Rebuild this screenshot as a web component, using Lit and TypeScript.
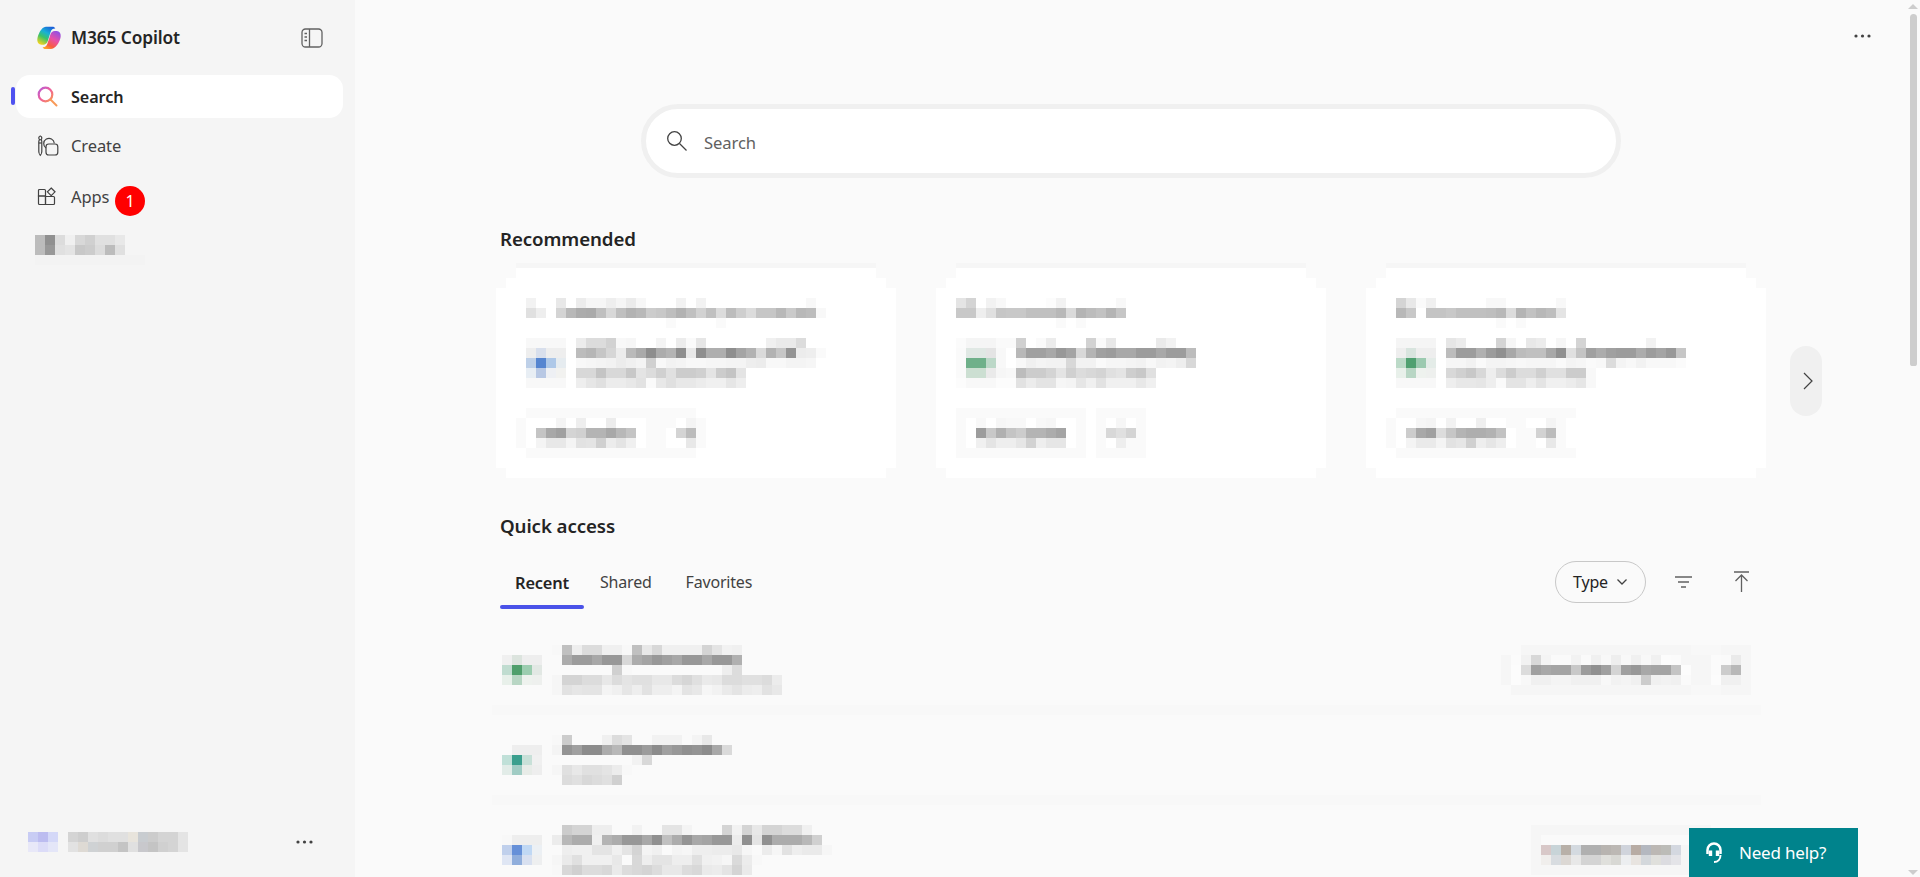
import { LitElement, html, css, svg } from "lit";
import { customElement } from "lit/decorators.js";

const CELL = 10;

function mosaic(rows: string[]) {
  const parsed = rows.map((r) => r.trim().split(/\s+/));
  const cols = Math.max(...parsed.map((r) => r.length));
  const rects = parsed.flatMap((row, y) =>
    row.map((t, x) => {
      if (t === ".") return null;
      const fill = t.length === 2 ? `#${t}${t}${t}` : `#${t}`;
      return svg`<rect x=${x * CELL} y=${y * CELL} width=${CELL} height=${CELL} fill=${fill}></rect>`;
    })
  );
  return html`<svg class="mosaic" width=${cols * CELL} height=${rows.length * CELL} shape-rendering="crispEdges">${rects}</svg>`;
}

interface CardData {
  title: string[];
  file: string[];
  chips: string[];
}

const cards: CardData[] = [
  {
    title: [
      ". f2 . . e8 . ec f6 f6 ee f5 eb f7 . . . f2 . f2 . . . . . . . . . . f8",
      ". e0 ee . d4 b8 ac aa bf d8 bf b2 b8 cc c8 be b2 c0 d2 c0 dc bc ce dc c6 c6 b8 ca b8 bc f8",
      ". . . . . . . . . . . . . . . fa . . . . fa",
    ],
    file: [
      ". f8 f8 f8 f8 . ec dc dc d2 f8 f6 . . f4 . ec fa e6 . . . . . . f0 ea ea dc",
      ". ee d8dfec ee ee . bc b6 c6 d6 ec ba aa 8e ac b4 8e e8 8e ae ae 8e a4 b2 da b2 c6 94 ec ee fa",
      ". bed0e8 5585d0 aec8e8 e6ecf0 . f8 f6 f4 f2 ec f0 f4 d0 f8 f2 f4 f8 f8 f6 f6 f4 f4 ee ec f8 f8 f4 f4 f6",
      ". e8eef4 b8c8e4 eef0f4 f2f2f0 . d8 d8 c4 d8 d8 c8 e4 dc d0 e0 cc cc d0 e4 cc c4 e4",
      ". f8 f8 f8 f8 . ee e6 e0 ec ec e8 e2 fa e8 e0 e8 e8 ec f0 f0 e6 ee",
    ],
    chips: [
      ". fa fa fa fa fa fa fa fa fa fa fa fa fa fa fa fa fa",
      "fa . . . f4 . ee . . ec . . . fa fa fa . f4 fa",
      "fa . c4 a8 a0 d4 d0 b4 b4 a8 b8 c4 . fa fa . d4 bc fa",
      "fa . f4 e8 e8 f4 e2 e4 d0 ec e4 f0 . fa fa . . e8 fa",
      ". fa fa fa fa fa fa fa fa fa fa fa fa fa fa fa fa fa",
    ],
  },
  {
    title: [
      "e4 d4 . f2 f8 . . . . fc f2 . . . . . f8",
      "c8 c8 ee e0 c6 c8 c8 c0 c0 c0 b8 da b4 bc c2 b4 c6",
      ". . . . . . . . . . fa . fa",
    ],
    file: [
      "fb f5 f5 f5 fa fa d0 . fa ec . . . d2 fa e8 . . . . ea f2",
      "fa e0e8e4 e0e8e4 e4 f8 . b8 a0 a0 a8 98 a4 d8 b4 a0 9c a8 a8 9c 9c a8 9c 9c bc",
      "fa 6fb08a 6fb08a bcd8c8 f8 . f8 f0 f4 f2 f2 d8 f2 f2 fa f6 f6 f4 f2 f8 f2 f4 ee d8",
      "fa ccdfd2 ccdfd2 ea f6 f8 bc cc cc d4 e4 d0 dc d8 d4 e0 e4 ce c8 e0",
      "fc f8 f8 f8 fc fc e2 ec e4 e4 f6 f4 e6 f0 e2 f0 f0 f0 e8 f0",
    ],
    chips: [
      "fa fa fa fa fa fa fa fa fa fa fa fa fa . fa fa fa fa fa",
      "fa . f8 . f6 f8 f8 . f8 f6 . . fa . fa . f6 . fa",
      "fa . 9c c8 b0 c4 cc b4 b4 ac a4 . fa . fa d8 e0 d4 fa",
      "fa . f0 e4 ee ee e6 d2 ee e6 e6 . fa . fa . ee fa fa",
      "fa fa fa fa fa fa fa fa fa fa fa fa fa . fa fa fa fa fa",
    ],
  },
  {
    title: [
      ". d4 e8 fa f0 . . . . . f8 f8 . . . . . f8",
      ". b8 c8 . c4 c4 c8 c0 c0 c0 be b8 dc b4 c2 b8 be e4",
      ". . . . . . . . . . . fa . fa",
    ],
    file: [
      ". f5 f5 f5 f5 . e6 ec . . . d4 f6 . e8 ec . f6 . d4 . . . . . . f2",
      ". ee d8e4de ee ee . bc 9c 9c b0 9c 90 a8 bc c0 c0 a8 90 e0 c4 a0 ac a0 9c 9c ac 9c a4 98 c6",
      ". bcdac8 4fa070 9ccab0 e4ece8 . f6 f6 f2 fa f4 f4 f6 f8 f6 f6 f6 fa f4 f6 fa f8 dc f4 f8 f2 f8 f8 f8 fb",
      ". e8f0ea b8d6c4 eef2ee eef0ee . d8 d0 c8 d8 ee dc cc dc dc d0 e0 e0 cc cc f8",
      ". f8 f8 f8 f8 . ee e8 e8 e6 ee fa e4 e4 ee e4 f0 f0 ec e6 f8",
    ],
    chips: [
      ". fa fa fa fa fa fa fa fa fa fa fa fa fa fa fa fa fa fa",
      "fa . . f6 f4 . f2 . . ef . . fa fa . . f4 fa",
      "fa . cc a8 a0 dc c6 b4 ae ae b2 c2 . fa fa d2 bc fa",
      "fa . f4 ea ea f4 e2 e6 d0 ee e6 ee . fa fa . e8 fa",
      ". fa fa fa fa fa fa fa fa fa fa fa fa fa fa fa fa fa fa",
    ],
  },
];

const recent: { left: string[]; right?: string[] }[] = [
  {
    left: [
      "fa fa fa fa . f8 c0 ee dc dc f0 f0 f8 c0 e8 d8 f0 f0 f0 f0 d4 e4 f2 f0",
      "f0 dce4de ee ee . fa ac 9c 9c a8 98 98 d8 ac a4 98 a0 a8 98 98 a8 98 98 b0",
      "c0dcd0 4f9f6c 9ccdb0 e2e8e4 . . . . . . . d0 f8 . . . . . . . . . ee dc",
      "e8f0ea b8d6c4 eef2ee eef0ee . f6 d4 d4 dc dc e8 dc e4 e0 e0 e8 e8 dc d6 e0 ea e8 dc dc e0 e0 dc ec",
      "fa fa fa fa . f6 e2 e6 e4 e4 f4 f0 e6 ee e2 ee ee f4 e4 e8 f6 f2 ea e4 ec ee e2 e8",
    ],
    right: [
      ". . f6 f6 f6 f6 f6 f6 f6 f6 f6 f6 f6 f6 f6 f6 f6 f6 f6 f8 f8 f8 f6 f6 f6",
      "f6 fb f2 d8 f4 fa fa f2 fa f0 f8 ee f8 f0 f8 f0 fc fb f6 f6 f6 fb fa ea f6",
      "f6 fc dc a0 a8 a4 a4 c8 9c 90 a0 d4 a0 98 a8 a4 a4 c4 fc f6 f6 fb cc b8 f6",
      "f6 fc f8 f0 f0 f4 f4 f0 f0 f0 f8 f2 f4 f0 cc f0 f2 f0 fa f6 f6 fc f0 f0 f6",
      ". f6 f6 f6 f6 f6 f6 f6 f6 f6 f6 f6 f6 f6 f6 f6 f6 f6 f6 f8 f8 f8 f6 f6 f6",
    ],
  },
  {
    left: [
      "fa fa fa fa . f8 cc . . . f0 dc e4 . fa f2 f2 f2 . f4 e8",
      "fa ee ee ee . f4 94 a0 8c 8c ac b8 90 90 9c 8c a0 98 90 94 8c a8 da",
      "c0e0d8 3a9f8e c8e0d8 f0 . . . . . . . . . f2 d8",
      "e2ece8 a0ccc4 e8ece8 ee . f6 e0 e8 e0 e0 e4 ec f8",
      "fa fa fa fa . fa dc e0 d8 dc e0 d0",
    ],
  },
  {
    left: [
      "fa fa fa fa . . cc d4 d4 ee ee . . f2 fa . e4 e4 f4 . . . d4 f2 d4 e8 d4 d4 dc dc f0",
      "f8 ee ee ee . ec b8 ac ac f0 b4 ac 98 98 a8 90 c0 ac 94 a8 a4 98 98 ec 90 e4 90 ac ac ac b8 d0",
      "c0d0ec 6690d8 c0d8f4 ecf0f4 . fa ee f0 f0 e4 e4 f0 e4 d4 f4 f0 fa f4 f6 ee ee ec ec e8 f6 fa ec f6 e2 ee ea ea f6",
      "dfe6f4 90aedc d8e0f0 eeeff0 . f6 ea e0 f0 f0 f0 e8 fa d8 ee e4 e4 ee ee e0 f0 f2 f6 da ec f8",
      "fa fa fa fa . f8 d8 d0 dc dc d8 ea dc d8 d4 dc e8 e8 dc d8 ea ec e4 d4 ea",
    ],
    right: [
      "f6 f6 f6 f6 f6 f6 f6 f6 f6 f6 f6 f6 f6 f6 f6 f6 f6 f6 . . . .",
      "f6 fa fa fa fa fa fa fa fa fa fa fa fa fa fa fa f6 f6 . . . .",
      "f6 d8c8c8 c8d4d8 b8b0a8 d4dae0 b0b0b0 b0b0b0 b8b4b0 bcb8b4 d0d4dc b8aca4 b4b8c0 bcb8b4 bcbcb8 d4d8e0 f6 f6 f6 . . . .",
      "f6 f0eeec d8dce0 dcd8d4 e8e8e8 d4d4d4 d4d4d4 e0e0dc d8d8d4 eceef0 e8e4e0 d4d8dc e0e0dc dcdce0 e4e4e8 f6 f6 f6 . . . .",
      "f6 f6 f6 f6 f6 f6 f6 f6 f6 f6 f6 f6 f6 f6 f6 f6 f6 f6 . . . .",
    ],
  },
];

const dots = html`<svg width="17" height="4" viewBox="0 0 17 4" fill="#424242"><circle cx="2" cy="2" r="1.6"></circle><circle cx="8.5" cy="2" r="1.6"></circle><circle cx="15" cy="2" r="1.6"></circle></svg>`;

const logo = html`<svg width="24" height="24" viewBox="0 0 24 24">
  <defs>
    <linearGradient id="lgA" x1="0.75" y1="0" x2="0.2" y2="1">
      <stop offset="0" stop-color="#1a5fd8"></stop>
      <stop offset="0.35" stop-color="#18b0d8"></stop>
      <stop offset="0.62" stop-color="#3cc368"></stop>
      <stop offset="1" stop-color="#f8d41c"></stop>
    </linearGradient>
    <linearGradient id="lgB" x1="0.85" y1="0" x2="0.25" y2="1">
      <stop offset="0" stop-color="#8a50e8"></stop>
      <stop offset="0.45" stop-color="#e850a8"></stop>
      <stop offset="0.8" stop-color="#f85c40"></stop>
      <stop offset="1" stop-color="#fca028"></stop>
    </linearGradient>
  </defs>
  <path fill="url(#lgA)" d="M9 .8h6.500c1.300 0 2.300.6 2.800 1.700-2.300-.1-3.800 1-4.600 3.300l-2.900 9.200c-.7 2.100-2.100 3.300-4 3.700H4.500C1.800 18.700.2 16.500.3 13.600c.1-2.100.8-4.100 1.600-5.800C3.700 3.900 5.600 1.100 9 .8z"></path>
  <path fill="url(#lgB)" d="M17.800 5h2c2.600 0 4 2.200 3.900 5-.1 2.300-.9 4.500-2 6.400-1.800 3.100-4 6.100-7.700 6.600H8.500c-1.300 0-2.400-.6-2.900-1.800 2.400.3 3.900-1 4.700-3.200l3.100-9.500C14.100 6.300 15.600 5 17.800 5z"></path>
</svg>`;

const panelIcon = html`<svg width="22" height="20" viewBox="0 0 22 20" fill="none" stroke="#616161" stroke-width="1.300">
  <rect x="1" y="1" width="20" height="18" rx="3.500"></rect>
  <path d="M8.500 1v18"></path>
  <path d="M3.500 5.500h2.500M3.500 9h2.500M3.500 12.500h2.500" stroke-width="1.400"></path>
</svg>`;

const searchGrad = html`<svg width="22" height="22" viewBox="0 0 22 22" fill="none">
  <defs>
    <linearGradient id="sg" x1="0" y1="0" x2="1" y2="1">
      <stop offset="0" stop-color="#b45cd8"></stop>
      <stop offset="0.5" stop-color="#f0609a"></stop>
      <stop offset="1" stop-color="#f89850"></stop>
    </linearGradient>
  </defs>
  <circle cx="8.500" cy="8.500" r="6.800" stroke="url(#sg)" stroke-width="2.200"></circle>
  <path d="M13.500 13.500l6 6" stroke="#f89a58" stroke-width="2" stroke-linecap="round"></path>
</svg>`;

const createIcon = html`<svg width="22" height="22" viewBox="0 0 22 22" fill="none" stroke="#424242" stroke-width="1.200">
  <path d="M3.800 1c-1.200 0-2 .8-2 2 0 .8.400 1.400 1 1.700-.8.300-1 .9-1 1.700v10c0 1 1 3.600 1.500 4 .5-.4 1.500-3 1.500-4V6.400c0-.8-.3-1.400-1-1.700.7-.3 1-.9 1-1.700 0-1.200-.8-2-2-2z"></path>
  <path d="M1.800 8h3"></path>
  <path d="M9 13a5.300 5.300 0 1 1 8.300-4.800"></path>
  <rect x="9" y="9" width="11.800" height="11" rx="2.800"></rect>
</svg>`;

const appsIcon = html`<svg width="20" height="20" viewBox="0 0 20 20" fill="none" stroke="#424242" stroke-width="1.200">
  <path d="M2.500 2.500h5c.6 0 1 .4 1 1v5.500H1.500V3.500c0-.6.400-1 1-1z"></path>
  <path d="M1.500 9h7v8.500h-6c-.6 0-1-.4-1-1z"></path>
  <path d="M8.500 9.500h8c.6 0 1 .4 1 1v6c0 .6-.4 1-1 1h-8z"></path>
  <path d="M14.200 1l3.800 3.800-3.800 3.800-3.800-3.800z"></path>
</svg>`;

@customElement("app-root")
export class AppRoot extends LitElement {
  static styles = css`
    :host {
      display: block;
      height: 877px;
      overflow: hidden;
      font-family: "Noto Sans", "Open Sans", sans-serif;
      color: #242424;
    }
    .mosaic { display: block; flex: none; }
    .shell { display: flex; height: 877px; background: #fafafa; }

    .side {
      flex: 0 0 355px;
      background: #f5f5f5;
      display: flex;
      flex-direction: column;
      position: relative;
      box-sizing: border-box;
      padding: 0 12px 0 16px;
    }
    .brand { display: flex; align-items: center; height: 75px; padding: 0 0 0 21px; }
    .brand span { margin-left: 10px; font-size: 17.300px; font-weight: 600; flex: 1; letter-spacing: -0.1px; line-height: 24px; }
    .brand svg:last-child { margin-right: 20px; }
    .nav {
      display: flex; align-items: center; height: 43px; padding-left: 21px; border-radius: 14px;
      font-size: 16.500px; color: #424242; position: relative; margin-bottom: 8px; letter-spacing: -0.1px;
    }
    .nav .ico { width: 34px; flex: none; display: flex; align-items: center; }
    .nav.on { background: #fff; color: #242424; font-weight: 600; margin-bottom: 6px; font-size: 16.200px; }
    .nav.on::before {
      content: ""; position: absolute; left: -5px; top: 12px; width: 4px; height: 18px;
      border-radius: 2px; background: #4f52f0;
    }
    .badge {
      position: absolute; left: 99px; top: 11px; width: 30px; height: 30px; border-radius: 50%;
      background: #ff0000; color: #fff; font-size: 16px; display: flex; align-items: center; justify-content: center;
    }
    .hist { margin: 9px 0 0 19px; }
    .account {
      margin-top: auto; display: flex; align-items: center; padding: 0 30px 25px 12px;
      justify-content: space-between;
    }
    .acct-l { display: flex; gap: 10px; }

    .main { flex: 1; min-width: 0; position: relative; }
    .top { height: 72px; display: flex; justify-content: flex-end; align-items: center; padding-right: 36px; box-sizing: border-box; }
    .content { width: 1552px; }
    .searchbar {
      margin: 32px auto 0; width: 980px; height: 74px; box-sizing: border-box; border: 5px solid #f0f0f0;
      border-radius: 37px; background: #fff; display: flex; align-items: center; padding-left: 20px; gap: 16px;
      font-size: 16.600px; color: #616161; letter-spacing: -0.1px;
    }
    .searchbar span { padding-top: 2px; }
    .sect { padding-left: 145px; font-size: 18.700px; line-height: 24px; font-weight: 600; letter-spacing: -0.100px; }
    .sect.rec { margin-top: 49px; }
    .sect.qa { margin-top: 36px; }

    .carousel { display: flex; margin: 12px 0 0 141px; align-items: flex-start; }
    .cards { display: grid; grid-template-columns: 400px 390px 400px; gap: 40px; }
    .card {
      height: 215px; box-sizing: border-box; padding: 30px 0 0 20px; background: #fff; border-top: 5px solid #f6f6f6;
      display: flex; flex-direction: column;
      clip-path: polygon(20px 0, calc(100% - 20px) 0, calc(100% - 20px) 15px, calc(100% - 10px) 15px, calc(100% - 10px) 25px, 100% 25px,
        100% calc(100% - 10px), calc(100% - 10px) calc(100% - 10px), calc(100% - 10px) 100%, 10px 100%, 10px calc(100% - 10px), 0 calc(100% - 10px),
        0 25px, 10px 25px, 10px 15px, 20px 15px);
    }
    .card .file { margin-top: 10px; }
    .card .chips { margin-top: 20px; }
    .next {
      flex: none; width: 32px; height: 70px; margin: 83px 0 0 24px; border-radius: 16px; background: #f0f0f0;
      display: flex; align-items: center; justify-content: center; box-sizing: border-box; padding-left: 3px;
    }

    .tabs { display: flex; align-items: flex-start; margin: 20px 0 0 145px; height: 51px; padding-right: 157px; }
    .tab { padding: 0 15px; height: 51px; line-height: 49px; font-size: 16px; color: #424242; position: relative; letter-spacing: -0.2px; }
    .tab + .tab { padding: 0 17px; }
    .tab.on { color: #242424; font-weight: 600; width: 84px; box-sizing: border-box; font-size: 16.400px; padding: 0; text-align: center; margin-right: -1px; }
    .tab.on::after {
      content: ""; position: absolute; left: 0; right: 0; bottom: 0; height: 4px; border-radius: 2px; background: #4a52e8;
    }
    .tools { margin-left: auto; display: flex; align-items: center; height: 44px; margin-top: 2px; }
    .pill {
      width: 91px; height: 42px; box-sizing: border-box; border: 1px solid #c8c8c8; border-radius: 21px;
      display: flex; align-items: center; justify-content: center; gap: 8px; font-size: 16px; letter-spacing: -0.2px;
    }
    .tool-a { margin-left: 28px; display: flex; }
    .tool-b { margin-left: 40px; display: flex; }

    .list { margin: 36px 0 0 137px; width: 1269px; }
    .row { display: flex; justify-content: space-between; height: 50px; padding: 0 10px; }
    .rule { height: 10px; background: #f8f8f8; margin: 10px 0 20px; }
    .rule:last-child { display: none; }

    .help {
      position: absolute; right: 62px; top: 828px; width: 169px; height: 49px; background: #00838c; color: #fff;
      display: flex; align-items: center; font-size: 17px; box-sizing: border-box; padding-left: 16px; gap: 16px; letter-spacing: -0.2px;
    }
    .bar { position: absolute; right: 3px; top: 14px; width: 7px; height: 352px; background: #cdcdcd; border-radius: 4px 4px 3px 3px; }
    .arr { position: absolute; right: 2px; width: 0; height: 0; border-left: 5px solid transparent; border-right: 5px solid transparent; }
    .arr.up { top: 4px; border-bottom: 5px solid #cdcdcd; }
    .arr.down { bottom: 2px; border-top: 5px solid #cdcdcd; }
  `;

  render() {
    return html`
      <div class="shell">
        <aside class="side">
          <div class="brand">${logo}<span>M365 Copilot</span>${panelIcon}</div>
          <div class="nav on"><span class="ico">${searchGrad}</span>Search</div>
          <div class="nav"><span class="ico">${createIcon}</span>Create</div>
          <div class="nav"><span class="ico">${appsIcon}</span>Apps<span class="badge">1</span></div>
          <div class="hist">
            ${mosaic([
              "bc 90 dc f0 d8 d0 e0 e0 e8",
              "bc 98 e0 e4 c8 cc dc bc e0",
              "f3 f3 f3 f3 f3 f3 f3 f3 f3 f3 f3",
            ])}
          </div>
          <div class="account">
            <div class="acct-l">
              ${mosaic(["c8ccf4 bcbcf0 d4d8f8", "e8e8f8 dcdcf8 e4e6f8"])}
              ${mosaic([
                "d4 ce e0 dc e0 e0 e8e4dc c8ccd0 cc d4 d4 e4",
                "e2 dedad4 cfd2d4 d0 d0 c4 e0 c8c8cc c4 d0 d4 e4",
              ])}
            </div>
            ${dots}
          </div>
        </aside>
        <main class="main">
          <div class="content">
            <div class="top">${dots}</div>
            <div class="searchbar">
              <svg width="22" height="22" viewBox="0 0 22 22" fill="none" stroke="#424242" stroke-width="1.300">
                <circle cx="8.500" cy="8.500" r="6.800"></circle>
                <path d="M13.500 13.500l7 7"></path>
              </svg>
              <span>Search</span>
            </div>
            <div class="sect rec">Recommended</div>
            <div class="carousel">
              <div class="cards">
                ${cards.map(
                  (c) => html`<div class="card">
                    ${mosaic(c.title)}
                    <div class="file">${mosaic(c.file)}</div>
                    <div class="chips">${mosaic(c.chips)}</div>
                  </div>`
                )}
              </div>
              <div class="next">
                <svg width="10" height="18" viewBox="0 0 10 18" fill="none" stroke="#424242" stroke-width="1.200"><path d="M1 1l8 8-8 8"></path></svg>
              </div>
            </div>
            <div class="sect qa">Quick access</div>
            <div class="tabs">
              <div class="tab on">Recent</div>
              <div class="tab">Shared</div>
              <div class="tab">Favorites</div>
              <div class="tools">
                <div class="pill">Type
                  <svg width="12" height="8" viewBox="0 0 12 8" fill="none" stroke="#424242" stroke-width="1.300"><path d="M1.500 1.500L6 6l4.500-4.500"></path></svg>
                </div>
                <span class="tool-a">
                  <svg width="19" height="14" viewBox="0 0 19 14" fill="none" stroke="#616161" stroke-width="1.400"><path d="M1 2h17M4 7h11M7 12h5"></path></svg>
                </span>
                <span class="tool-b">
                  <svg width="17" height="22" viewBox="0 0 17 22" fill="none" stroke="#616161" stroke-width="1.300"><path d="M1 1h15M8.500 21V4M2.500 10l6-6 6 6"></path></svg>
                </span>
              </div>
            </div>
            <div class="list">
              ${recent.map(
                (r) => html`<div class="row">${mosaic(r.left)}${r.right ? mosaic(r.right) : ""}</div><div class="rule"></div>`
              )}
            </div>
          </div>
          <div class="help">
            <svg width="18" height="22" viewBox="0 0 18 22" fill="none" stroke="#fff" stroke-width="2.500">
              <path d="M2.500 12V8a6.500 6.500 0 0 1 13 0v4"></path>
              <path d="M5.500 8.500v5.500M12.500 8.500v5.500" stroke-width="3.400"></path>
              <path d="M15.500 13c0 4-2.500 7-6.500 7" stroke-width="2"></path>
            </svg>
            <span>Need help?</span>
          </div>
          <div class="arr up"></div>
          <div class="bar"></div>
          <div class="arr down"></div>
        </main>
      </div>
    `;
  }
}
